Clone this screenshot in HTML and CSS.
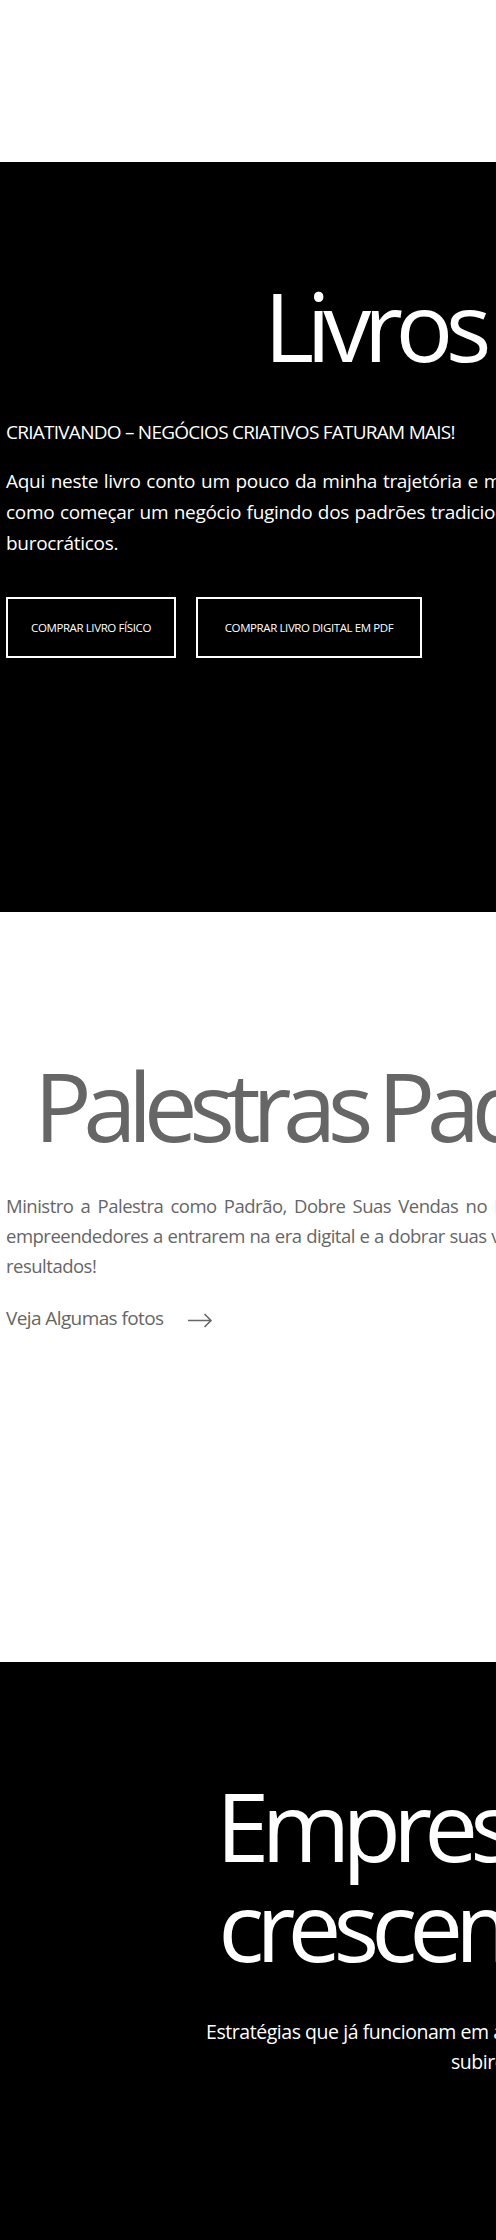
FILE: index.html
```html
<!DOCTYPE html>
<html lang="pt-BR">
<head>
<meta charset="utf-8">
<title>Livros e Palestras</title>
<link rel="stylesheet" href="styles.css">
</head>
<body>
<div class="top-space"></div>

<section class="books">
  <div class="col">
    <h2 class="title">Livros</h2>
    <p class="kicker">CRIATIVANDO – NEGÓCIOS CRIATIVOS FATURAM MAIS!</p>
    <p class="lead">Aqui neste livro conto um pouco da minha trajetória e mostro como começar um negócio fugindo dos padrões tradicionais e burocráticos.</p>
    <div class="actions">
      <a class="btn btn-short" href="#">COMPRAR LIVRO FÍSICO</a>
      <a class="btn btn-long" href="#">COMPRAR LIVRO DIGITAL EM PDF</a>
    </div>
  </div>
</section>

<section class="talks">
  <div class="col">
    <h2 class="title gray">Palestras Padrão</h2>
    <p class="lead gray small">Ministro a Palestra como Padrão, Dobre Suas Vendas no Digital, levo empreendedores a entrarem na era digital e a dobrar suas vendas com resultados!</p>
    <a class="more" href="#">Veja Algumas fotos
      <svg class="arrow" width="26" height="16" viewBox="0 0 26 16" aria-hidden="true"><path d="M1 8.5H24M17.5 2L24 8.5L17.5 15" fill="none" stroke="#666" stroke-width="1.6"/></svg>
    </a>
  </div>
</section>

<section class="companies">
  <div class="wide">
    <h2 class="title">Empresas que já<br>crescem comigo</h2>
    <p class="sub">Estratégias que já funcionam em algumas empresas e que fizeram muitas<br>subirem de nível.</p>
  </div>
</section>
</body>
</html>
```

FILE: styles.css
```css
html, body {
  margin: 0;
  padding: 0;
}
body {
  font-family: "Open Sans", "Noto Sans", sans-serif;
  background: #fff;
  overflow-x: hidden;
  width: 496px;
}
.top-space {
  height: 162px;
}
section {
  overflow: hidden;
  box-sizing: border-box;
}
.books {
  background: #000;
  color: #fff;
  height: 750px;
  padding-top: 115px;
}
.talks {
  background: #fff;
  color: #666;
  height: 750px;
  padding-top: 145px;
}
.companies {
  background: #000;
  color: #fff;
  height: 578px;
  padding-top: 113px;
}
.col {
  width: 736px;
  margin-left: 6px;
}
.title {
  margin: 0;
  font-weight: 400;
  font-size: 96px;
  line-height: 1;
  text-align: center;
  letter-spacing: -7.5px;
  white-space: nowrap;
}
.title.gray {
  font-size: 96px;
  letter-spacing: -8.5px;
  word-spacing: -4px;
  text-align: left;
  padding-left: 28px;
}
.kicker {
  margin: 46px 0 0;
  font-size: 19px;
  line-height: 26px;
  letter-spacing: -0.75px;
  white-space: nowrap;
}
.lead {
  margin: 21px 0 0;
  width: 540px;
  font-size: 19px;
  line-height: 31px;
  text-align: justify;
  letter-spacing: -0.3px;
}
.lead.small {
  margin-top: 38px;
  width: 584px;
  font-size: 18.5px;
  line-height: 30px;
  letter-spacing: -0.5px;
}
.actions {
  display: flex;
  gap: 20px;
  margin-top: 38px;
}
.btn {
  display: flex;
  align-items: center;
  justify-content: center;
  height: 61px;
  box-sizing: border-box;
  border: 2px solid #fff;
  color: #fff;
  text-decoration: none;
  font-size: 11.5px;
  letter-spacing: -0.4px;
}
.btn-short {
  width: 170px;
}
.btn-long {
  width: 226px;
}
.more {
  display: inline-flex;
  align-items: center;
  gap: 24px;
  margin-top: 22px;
  color: #666;
  text-decoration: none;
  font-size: 19px;
  line-height: 30px;
  letter-spacing: -0.6px;
}
.arrow {
  display: block;
  margin-top: 4px;
}
.wide {
  width: 1050px;
}
.wide .title {
  font-size: 96px;
  line-height: 100px;
  letter-spacing: -8px;
}
.sub {
  margin: 42px 0 0;
  font-size: 19.5px;
  line-height: 30px;
  text-align: center;
  letter-spacing: -0.45px;
  white-space: nowrap;
}
```
